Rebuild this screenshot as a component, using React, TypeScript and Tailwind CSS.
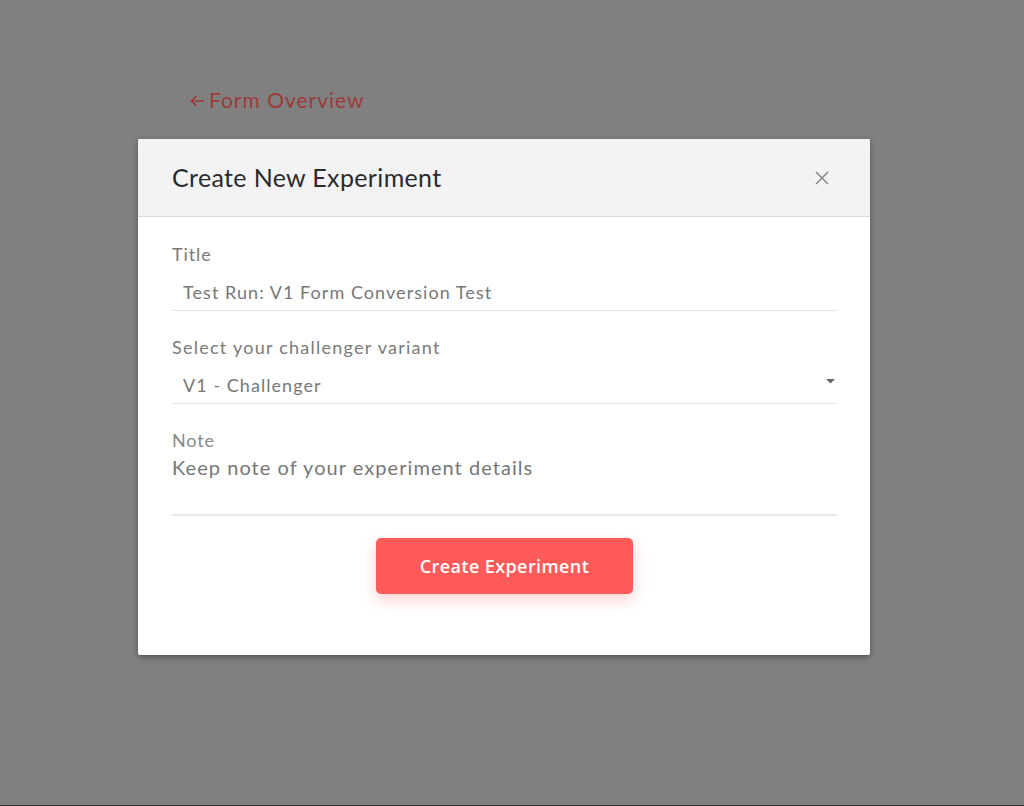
import React from "react";

export default function App() {
  const font = { fontFamily: "Lato, 'Noto Sans', sans-serif" };
  return (
    <div className="w-full h-[806px] bg-[#808080] flex flex-col" style={font}>
      <div className="flex-1 flex flex-col">
        <div className="pl-[189px] pt-[86px] h-[139px]">
          <a className="flex items-center text-[21px] tracking-[1px] text-[#9e3a3a] leading-[28px]">
            <svg width="17" height="14" viewBox="0 0 17 14" className="mr-[3px] mt-[2px]">
              <path d="M15 7H2.5M7.5 2L2.5 7L7.5 12" fill="none" stroke="#9e3a3a" strokeWidth="1.6" />
            </svg>
            Form Overview
          </a>
        </div>
        <div className="ml-[138px] w-[732px] h-[516px] bg-white rounded-[2px] shadow-[0_2px_6px_rgba(0,0,0,0.35)] flex flex-col overflow-hidden">
          <div className="h-[78px] bg-[#f3f3f3] border-b border-[#dcdcdc] flex items-center justify-between pl-[34px] pr-[41px]">
            <h2 className="text-[25px] text-[#2b2b2b] tracking-[0.35px]">Create New Experiment</h2>
            <svg width="14" height="14" viewBox="0 0 14 14">
              <path d="M1 1L13 13M13 1L1 13" stroke="#8a8a8a" strokeWidth="1.6" />
            </svg>
          </div>
          <div className="px-[34px] pr-[33px] pt-[22px] flex flex-col">
            <label className="text-[18px] tracking-[0.9px] text-[#7a7a7a] leading-[30px]">Title</label>
            <div className="border-b border-[#e3e3e3] h-[42px] pt-[6px] flex items-center pl-[11px] text-[18px] tracking-[1.05px] text-[#777]">
              Test Run: V1 Form Conversion Test
            </div>
            <label className="text-[18px] tracking-[1.25px] text-[#7a7a7a] leading-[30px] mt-[21px]">Select your challenger variant</label>
            <div className="border-b border-[#e3e3e3] h-[42px] pt-[6px] flex items-center justify-between pl-[11px] pr-[2px] text-[18px] tracking-[1.05px] text-[#777]">
              <span>V1 - Challenger</span>
              <svg width="9" height="5" viewBox="0 0 9 5" className="mb-[8px]">
                <path d="M0 0H9L4.5 4.5Z" fill="#666" />
              </svg>
            </div>
            <label className="text-[18px] tracking-[0.9px] text-[#888] leading-[30px] mt-[21px]">Note</label>
            <div className="border-b-2 border-[#e6e6e6] h-[61px] text-[20px] tracking-[1.05px] text-[#777] leading-[24px]">
              Keep note of your experiment details
            </div>
            <div className="flex justify-center mt-[22px]">
              <button
                className="w-[257px] h-[56px] bg-[#ff5a5a] rounded-[5px] text-white text-[18px] tracking-[0.4px] font-semibold shadow-[0_6px_16px_rgba(255,90,90,0.28)]"
                style={{ fontFamily: "'Open Sans', sans-serif" }}
              >
                Create Experiment
              </button>
            </div>
          </div>
        </div>
      </div>
      <div className="h-[1px] bg-[#333]" />
    </div>
  );
}
